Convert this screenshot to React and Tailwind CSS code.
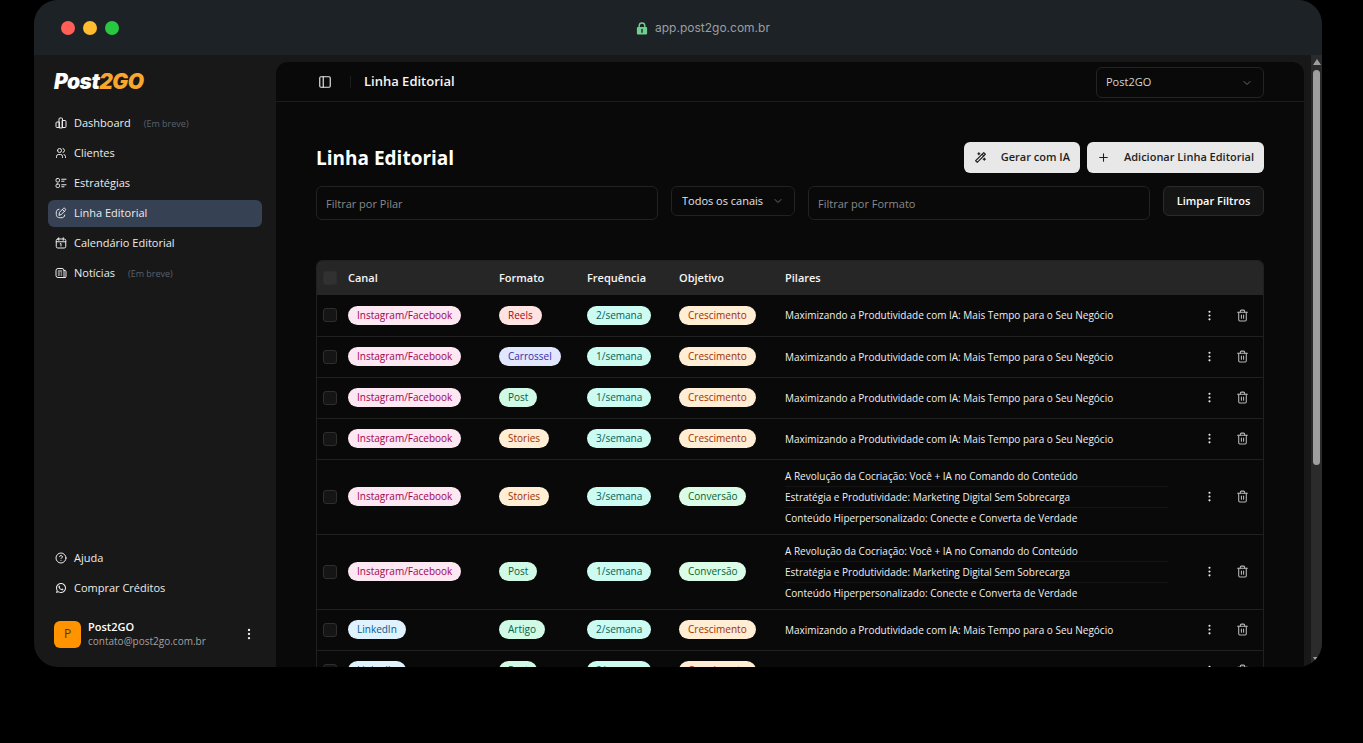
import {
  ChevronDown,
  CircleQuestionMark,
  EllipsisVertical,
  PanelLeft,
  Plus,
  Trash2,
} from 'lucide-react';
import { TbUsers, TbWand } from 'react-icons/tb';
import { RiWhatsappLine } from 'react-icons/ri';
import clsx from 'clsx';

const StrokeIcon = ({ className, children }) => (
  <svg
    className={className}
    viewBox="0 0 24 24"
    fill="none"
    stroke="currentColor"
    strokeWidth="2"
    strokeLinecap="round"
    strokeLinejoin="round"
  >
    {children}
  </svg>
);

const BarsIcon = ({ className }) => (
  <StrokeIcon className={className}>
    <path d="M8 10H4a2 2 0 0 0-2 2v7a2 2 0 0 0 2 2h4z" />
    <path d="M8 21V4a2 2 0 0 1 2-2h3a2 2 0 0 1 2 2v17z" />
    <path d="M15 7h5a2 2 0 0 1 2 2v10a2 2 0 0 1-2 2h-5z" />
  </StrokeIcon>
);

const StrategyIcon = ({ className }) => (
  <StrokeIcon className={className}>
    <rect x="2" y="3" width="7" height="7" rx="2.500" />
    <rect x="2" y="14" width="7" height="7" rx="2.500" />
    <path d="M13.500 4.500H22M13.500 8.500H18M13.500 15.500H22M13.500 19.500H18" />
  </StrokeIcon>
);

const PencilIcon = ({ className }) => (
  <StrokeIcon className={className}>
    <path d="M8 4.500C4 5 2.500 7 2.500 12.500c0 7 2 9 9 9 5.500 0 7.500-1.500 8-5.500" />
    <path d="M8 16l1-5.500 7-7c1.500-1.500 3-1.500 4.300-.3 1.200 1.300 1.200 2.800-.3 4.300l-7 7z" />
    <path d="M15 5l4 4" />
  </StrokeIcon>
);

const CalendarIcon = ({ className }) => (
  <StrokeIcon className={className}>
    <rect x="2.500" y="4" width="19" height="18" rx="3" />
    <path d="M2.500 9.500h19M7.500 1.500v5M16.500 1.500v5M10.500 13.500l1.500-.5v5" />
  </StrokeIcon>
);

const NewsIcon = ({ className }) => (
  <StrokeIcon className={className}>
    <path d="M20 21H6a4 4 0 0 1-4-4V7a4 4 0 0 1 4-4h8a4 4 0 0 1 4 4v12a2 2 0 0 0 4 0V9a2 2 0 0 0-2-2h-2" />
    <path d="M6.500 8h7M6.500 12h2.500M12 12h1.500M6.500 16h2.500M12 16h1.500" />
  </StrokeIcon>
);

const LockIcon = ({ className }) => (
  <svg className={className} viewBox="0 0 12 14">
    <path d="M3 6V4a3 3 0 0 1 6 0v2" fill="none" stroke="#6fcf8e" strokeWidth="1.500" />
    <rect x="0.500" y="5.500" width="11" height="8" rx="1" fill="#6fcf8e" />
    <path d="M6 8v3" stroke="#1d2327" strokeWidth="1.500" strokeLinecap="round" />
  </svg>
);

const mainLinks = [
  { label: 'Dashboard', icon: BarsIcon, soon: true },
  { label: 'Clientes', icon: TbUsers },
  { label: 'Estratégias', icon: StrategyIcon },
  { label: 'Linha Editorial', icon: PencilIcon, active: true },
  { label: 'Calendário Editorial', icon: CalendarIcon },
  { label: 'Notícias', icon: NewsIcon, soon: true },
];

const footerLinks = [
  { label: 'Ajuda', icon: CircleQuestionMark },
  { label: 'Comprar Créditos', icon: RiWhatsappLine },
];

const badgeColors = {
  'Instagram/Facebook': 'bg-pink-100 text-pink-800',
  LinkedIn: 'bg-sky-100 text-sky-800',
  Reels: 'bg-red-100 text-red-800',
  Carrossel: 'bg-indigo-100 text-indigo-800',
  Post: 'bg-emerald-100 text-emerald-800',
  Artigo: 'bg-emerald-100 text-emerald-800',
  Stories: 'bg-orange-100 text-orange-800',
  Crescimento: 'bg-orange-100 text-orange-800',
  'Conversão': 'bg-green-100 text-green-800',
};

const maximizing = ['Maximizando a Produtividade com IA: Mais Tempo para o Seu Negócio'];
const revolution = [
  'A Revolução da Cocriação: Você + IA no Comando do Conteúdo',
  'Estratégia e Produtividade: Marketing Digital Sem Sobrecarga',
  'Conteúdo Hiperpersonalizado: Conecte e Converta de Verdade',
];

const rows = [
  { canal: 'Instagram/Facebook', formato: 'Reels', freq: '2/semana', objetivo: 'Crescimento', pilares: maximizing },
  { canal: 'Instagram/Facebook', formato: 'Carrossel', freq: '1/semana', objetivo: 'Crescimento', pilares: maximizing },
  { canal: 'Instagram/Facebook', formato: 'Post', freq: '1/semana', objetivo: 'Crescimento', pilares: maximizing },
  { canal: 'Instagram/Facebook', formato: 'Stories', freq: '3/semana', objetivo: 'Crescimento', pilares: maximizing },
  { canal: 'Instagram/Facebook', formato: 'Stories', freq: '3/semana', objetivo: 'Conversão', pilares: revolution },
  { canal: 'Instagram/Facebook', formato: 'Post', freq: '1/semana', objetivo: 'Conversão', pilares: revolution },
  { canal: 'LinkedIn', formato: 'Artigo', freq: '2/semana', objetivo: 'Crescimento', pilares: maximizing },
  { canal: 'LinkedIn', formato: 'Post', freq: '2/semana', objetivo: 'Crescimento', pilares: maximizing },
];

const Badge = ({ children }) => (
  <span
    className={clsx(
      'flex h-[19px] w-fit items-center rounded-full px-[9px] text-[10px] font-medium whitespace-nowrap',
      badgeColors[children] || 'bg-teal-100 text-teal-800'
    )}
  >
    {children}
  </span>
);

const Checkbox = ({ label }) => (
  <input
    type="checkbox"
    aria-label={label}
    className="block size-[14px] appearance-none rounded-[3px] border border-[#2e2e2e] bg-white/5 checked:bg-gray-400"
  />
);

const NavLink = ({ label, icon: Icon, soon, active }) => (
  <li>
    <a
      href="#"
      className={clsx(
        'flex h-[27px] items-center gap-[7px] rounded-md px-[7px] text-[11px] text-[#ececec]',
        active ? 'bg-[#364154]' : 'hover:bg-white/5'
      )}
    >
      <Icon className="mb-0.5 size-3 shrink-0" />
      <span>{label}</span>
      {soon && <span className="ml-1.5 text-[9px] text-[#5c616b]">(Em breve)</span>}
    </a>
  </li>
);

const Sidebar = () => (
  <aside className="flex w-[242px] shrink-0 flex-col px-[14px] pb-[19px]">
    <div className="mt-4 px-1.5 font-['Inter',sans-serif] text-[21px] leading-[22px] font-black tracking-tight text-white italic">
      Post<span className="text-[#f9a62f]">2GO</span>
    </div>
    <nav className="mt-[17px] flex flex-1 flex-col justify-between">
      <ul className="space-y-[3px]">
        {mainLinks.map((link) => (
          <NavLink key={link.label} {...link} />
        ))}
      </ul>
      <ul className="space-y-[3px]">
        {footerLinks.map((link) => (
          <NavLink key={link.label} {...link} />
        ))}
      </ul>
    </nav>
    <div className="mt-[18px] flex items-center gap-[7px] px-1.5">
      <div className="flex size-[27px] items-center justify-center rounded-md bg-[#ff9300] text-xs text-[#5c3200]">P</div>
      <div className="flex-1">
        <p className="text-[11px] leading-[14px] font-semibold text-white">Post2GO</p>
        <p className="text-[10px] leading-[14px] text-[#a1a1a1]">contato@post2go.com.br</p>
      </div>
      <button aria-label="Conta" className="text-gray-200">
        <EllipsisVertical className="size-[14px]" />
      </button>
    </div>
  </aside>
);

const Topbar = () => (
  <header className="flex h-10 shrink-0 items-center border-b border-[#1c1c1c] pt-px pr-10 pl-[42px]">
    <button aria-label="Alternar menu" className="text-gray-200">
      <PanelLeft className="size-[14px]" />
    </button>
    <div className="mr-[13px] ml-[18px] h-3 w-px bg-[#1c1c1c]" />
    <span className="flex-1 text-[13px] font-semibold text-[#f5f5f5]">Linha Editorial</span>
    <div className="relative w-[168px]">
      <select
        aria-label="Cliente"
        className="block h-[31px] w-full appearance-none rounded-md border border-[#242424] bg-transparent px-[9px] text-[11px] text-[#d4d4d4]"
      >
        <option>Post2GO</option>
      </select>
      <ChevronDown className="pointer-events-none absolute top-2.5 right-[11px] size-3 text-[#6b6b6b]" />
    </div>
  </header>
);

const inputStyle =
  'h-[34px] min-w-0 flex-1 rounded-md border border-[#222222] bg-transparent px-[9px] text-[11px] text-gray-100 placeholder:text-[#8a8a8a]';

const Filters = () => (
  <div className="mt-[13px] flex items-start gap-[13px]">
    <input type="text" aria-label="Filtrar por Pilar" placeholder="Filtrar por Pilar" className={inputStyle} />
    <div className="relative w-[124px]">
      <select
        aria-label="Canal"
        className="block h-[30px] w-full appearance-none rounded-md border border-[#222222] bg-transparent px-[10px] text-[11px] text-[#e5e5e5]"
      >
        <option>Todos os canais</option>
      </select>
      <ChevronDown className="pointer-events-none absolute top-[9px] right-[11px] size-3 text-[#6b6b6b]" />
    </div>
    <input type="text" aria-label="Filtrar por Formato" placeholder="Filtrar por Formato" className={inputStyle} />
    <button className="h-[30px] w-[101px] rounded-md border border-[#2b2b2b] bg-[#151515] text-[11px] font-semibold whitespace-nowrap text-white">
      Limpar Filtros
    </button>
  </div>
);

const EditorialTable = () => (
  <div className="mt-10 overflow-hidden rounded-t-md border border-[#202020]">
    <table className="w-full table-fixed text-left">
      <colgroup>
        <col className="w-[31px]" />
        <col className="w-[151px]" />
        <col className="w-[88px]" />
        <col className="w-[92px]" />
        <col className="w-[106px]" />
        <col />
        <col className="w-[34px]" />
        <col className="w-[37px]" />
      </colgroup>
      <thead>
        <tr className="h-[34px] bg-[#262626] text-[11px] text-[#f5f5f5]">
          <th className="pl-1.5"><Checkbox label="Selecionar todos" /></th>
          <th className="font-semibold">Canal</th>
          <th className="font-semibold">Formato</th>
          <th className="font-semibold">Frequência</th>
          <th className="font-semibold">Objetivo</th>
          <th className="font-semibold">Pilares</th>
          <th />
          <th />
        </tr>
      </thead>
      <tbody>
        {rows.map((row, i) => (
          <tr key={i} className="h-[41px] border-b border-[#202020]">
            <td className="pl-1.5"><Checkbox label={`Selecionar linha ${i + 1}`} /></td>
            <td><Badge>{row.canal}</Badge></td>
            <td><Badge>{row.formato}</Badge></td>
            <td><Badge>{row.freq}</Badge></td>
            <td><Badge>{row.objetivo}</Badge></td>
            <td className="py-1.5 pr-6 text-[10px] text-[#f0f0f0]">
              <ul className="divide-y divide-[#141414]">
                {row.pilares.map((pilar) => (
                  <li key={pilar} className="py-0.5 leading-4">{pilar}</li>
                ))}
              </ul>
            </td>
            <td>
              <button aria-label="Opções" className="mx-auto block text-gray-200">
                <EllipsisVertical className="size-[13px]" />
              </button>
            </td>
            <td>
              <button aria-label="Excluir" className="ml-[10px] block text-[#b5b5b5]">
                <Trash2 className="size-[13px]" />
              </button>
            </td>
          </tr>
        ))}
      </tbody>
    </table>
  </div>
);

const primaryButton =
  'flex h-[31px] items-center gap-[14px] rounded-md bg-[#e8e8e8] px-[10px] text-[11px] font-semibold whitespace-nowrap text-[#1f1f1f]';

export default function App() {
  return (
    <div className="h-screen overflow-hidden bg-black pr-[41px] pb-[76px] pl-[34px] font-['Open_Sans',sans-serif]">
      <div className="flex h-full flex-col overflow-hidden rounded-3xl bg-[#181818]">
        {/* Window chrome */}
        <div className="grid h-[55px] shrink-0 grid-cols-3 items-center bg-[#1d2226] px-[27px]">
          <div className="flex gap-2">
            <span className="size-[14px] rounded-full bg-[#ff5f57]" />
            <span className="size-[14px] rounded-full bg-[#febc2e]" />
            <span className="size-[14px] rounded-full bg-[#28c840]" />
          </div>
          <div className="flex items-center justify-center gap-[7px] pt-px pl-[50px] font-['Inter',sans-serif] text-xs whitespace-nowrap text-[#9a9ea3]">
            <LockIcon className="h-[13px] w-3" />
            app.post2go.com.br
          </div>
        </div>

        <div className="flex min-h-0 flex-1">
          <Sidebar />
          <main className="mt-[7px] mr-[7px] flex min-w-0 flex-1 flex-col overflow-hidden rounded-t-xl bg-[#090909]">
            <Topbar />
            <section className="px-10 pt-10">
              <div className="flex items-center gap-[7px]">
                <h1 className="flex-1 text-[19px] leading-7 font-bold text-white">Linha Editorial</h1>
                <button className={primaryButton}>
                  <TbWand className="size-[13px]" />
                  Gerar com IA
                </button>
                <button className={primaryButton}>
                  <Plus className="size-[13px]" />
                  Adicionar Linha Editorial
                </button>
              </div>
              <Filters />
              <EditorialTable />
            </section>
          </main>

          {/* Scrollbar */}
          <div className="flex w-[11px] shrink-0 flex-col items-center justify-between bg-[#2b2b2b] py-1">
            <div className="flex min-h-0 flex-1 flex-col items-center gap-[5px]">
              <div className="border-x-4 border-b-[6px] border-x-transparent border-b-[#9f9f9f]" />
              <div className="h-[66%] w-[7px] rounded-full bg-[#9f9f9f]" />
            </div>
            <div className="border-x-4 border-t-[6px] border-x-transparent border-t-[#9f9f9f]" />
          </div>
        </div>
      </div>
    </div>
  );
}
